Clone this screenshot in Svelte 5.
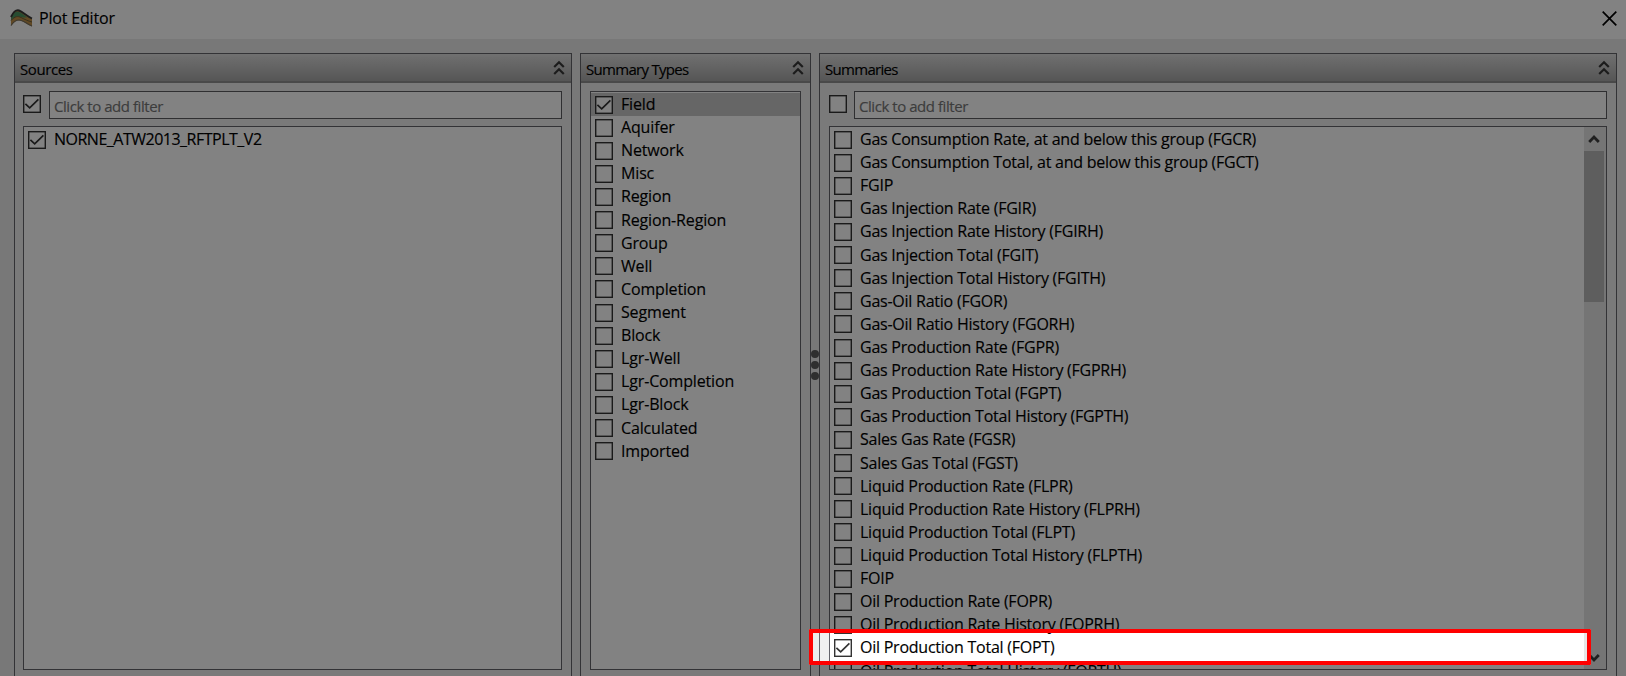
<script>
  const types = ['Field', 'Aquifer', 'Network', 'Misc', 'Region', 'Region-Region', 'Group', 'Well', 'Completion', 'Segment', 'Block', 'Lgr-Well', 'Lgr-Completion', 'Lgr-Block', 'Calculated', 'Imported'];
  const summaries = [
    'Gas Consumption Rate, at and below this group (FGCR)',
    'Gas Consumption Total, at and below this group (FGCT)',
    'FGIP',
    'Gas Injection Rate (FGIR)',
    'Gas Injection Rate History (FGIRH)',
    'Gas Injection Total (FGIT)',
    'Gas Injection Total History (FGITH)',
    'Gas-Oil Ratio (FGOR)',
    'Gas-Oil Ratio History (FGORH)',
    'Gas Production Rate (FGPR)',
    'Gas Production Rate History (FGPRH)',
    'Gas Production Total (FGPT)',
    'Gas Production Total History (FGPTH)',
    'Sales Gas Rate (FGSR)',
    'Sales Gas Total (FGST)',
    'Liquid Production Rate (FLPR)',
    'Liquid Production Rate History (FLPRH)',
    'Liquid Production Total (FLPT)',
    'Liquid Production Total History (FLPTH)',
    'FOIP',
    'Oil Production Rate (FOPR)',
    'Oil Production Rate History (FOPRH)',
    'Oil Production Total (FOPT)',
    'Oil Production Total History (FOPTH)'
  ];
</script>

{#snippet box(checked)}
  <svg class="box" viewBox="0 0 18 18">
    <rect x="0.7" y="0.7" width="16.6" height="16.6" fill="#fff" stroke="#333" stroke-width="1.4" />
    {#if checked}<path d="M2.4 8.8 6.7 12.9 15.4 4.4" fill="none" stroke="#333" stroke-width="1.7" />{/if}
  </svg>
{/snippet}

{#snippet header(title)}
  <header class="head">
    <span>{title}</span>
    <svg width="12" height="16" viewBox="0 0 12 16" fill="none" stroke="#383838" stroke-width="2.2"><path d="M1.2 7 6 2.2 10.8 7M1.2 14 6 9.2 10.8 14" /></svg>
  </header>
{/snippet}

{#snippet row(label, checked, selected)}
  <div class="row" class:selected>{@render box(checked)}<span>{label}</span></div>
{/snippet}

<div class="dialog">
  <div class="titlebar">
    <svg width="23" height="19" viewBox="0 0 23 19">
      <path d="M1 8C4 2 6 .5 9 1.500C13 3 17 7 22 9.500V17.500C16 15 13 11.500 9 11.500C5 11.500 3 14 1 17Z" fill="#c09048" />
      <path d="M1 9C4 3 6 2 9 3C12 4 14 6 17 8.500C13 9 11 7.500 8 7.500C5 7.500 3 9 1 11.500Z" fill="#4b9560" />
      <path d="M1 8C4 2 6 .5 9 1.500C13 3 17 7 22 9.500" fill="none" stroke="#383838" stroke-width="1.900" />
      <path d="M1 11.500C5 7 8 7 11 8.500C15 10.500 18 12 22 13" fill="none" stroke="#6e603c" stroke-width="1" />
      <path d="M1 16.500C3 13.500 5 11 9 11C13 11 16 14.500 22 17" fill="none" stroke="#77705f" stroke-width="1.200" />
    </svg>
    <span class="title">Plot Editor</span>
    <svg width="15" height="15" viewBox="0 0 15 15"><path d="M.7.7 14.300 14.300M14.300.7.7 14.300" stroke="#000" stroke-width="1.700" /></svg>
  </div>

  <div class="panels">
    <section class="panel sources">
      {@render header('Sources')}
      <div class="body">
        <div class="filter">{@render box(true)}<div class="input">Click to add filter</div></div>
        <div class="list">{@render row('NORNE_ATW2013_RFTPLT_V2', true, false)}</div>
      </div>
    </section>

    <section class="panel types">
      {@render header('Summary Types')}
      <div class="body">
        <div class="list">
          {#each types as t, i}{@render row(t, i === 0, i === 0)}{/each}
        </div>
      </div>
    </section>

    <div class="splitter"><i></i><i></i><i></i></div>

    <section class="panel summaries">
      {@render header('Summaries')}
      <div class="body">
        <div class="filter">{@render box(false)}<div class="input">Click to add filter</div></div>
        <div class="list scroll">
          <div class="rows">
            {#each summaries as s, i}{@render row(s, i === 22, false)}{/each}
          </div>
          <div class="bar">
            <svg width="12" height="10" viewBox="0 0 12 10"><path d="M1.200 8 6 3 10.800 8" fill="none" stroke="#404040" stroke-width="2.800" /></svg>
            <div class="thumb"></div>
            <svg class="down" width="12" height="10" viewBox="0 0 12 10"><path d="M1.200 2 6 7 10.800 2" fill="none" stroke="#404040" stroke-width="2.800" /></svg>
          </div>
        </div>
      </div>
    </section>
  </div>
  <div class="spotlight"></div>
</div>

<style>
  :global(body) { overflow: hidden; }
  .dialog {
    position: relative; width: 1626px; height: 676px; overflow: hidden; box-sizing: border-box;
    display: flex; flex-direction: column; background: #ececec; color: #000;
    font: 16px/23px "Open Sans", "Noto Sans", sans-serif; letter-spacing: -0.24px; white-space: nowrap;
    -webkit-text-stroke: 0.15px;
  }
  .dialog :global(*) { box-sizing: border-box; }
  svg { display: block; flex: none; }
  .titlebar { height: 39px; flex: none; background: #fff; display: flex; align-items: center; padding: 0 9px 3px 10px; }
  .title { flex: 1; margin-left: 6px; padding-top: 1px; letter-spacing: -0.18px; }
  .panels { flex: 1; display: flex; padding: 14px 10px 0 14px; min-height: 0; }
  .panel { height: 640px; border: 1px solid #64646b; display: flex; flex-direction: column; background: #f0f0f0; flex: none; }
  .sources { width: 558px; margin-right: 8px; }
  .types { width: 231px; }
  .summaries { width: 798px; }
  .head {
    height: 29px; flex: none; display: flex; justify-content: space-between; align-items: center; padding: 2px 6px 0 5px;
    background: linear-gradient(#dcdcdc, #a8a8a8); border-bottom: 2px solid #909090;
    font-size: 15px; letter-spacing: -0.7px;
  }
  .head span { padding-top: 1px; }
  .sources .head { letter-spacing: -0.4px; }
  .head svg { margin-top: -2px; }
  .body { padding: 8px 9px 0 8px; display: flex; flex-direction: column; gap: 7px; }
  .types .body, .summaries .body { padding-left: 9px; }
  .filter { display: flex; align-items: center; }
  .filter .input { flex: 1; height: 28px; margin-left: 8px; border: 1px solid #5c5c60; background: #fff; color: #777; padding: 3px 4px; font-size: 15px; letter-spacing: -0.45px; }
  .summaries .input { margin-left: 7px; }
  .box { width: 18px; height: 18px; }
  .filter .box { margin-top: -2px; }
  .list { height: 544px; border: 1px solid #64646b; background: #fff; overflow: hidden; padding-top: 1px; }
  .sources .list { letter-spacing: -0.5px; }
  .types .list { height: 579px; padding-top: 1px; letter-spacing: -0.15px; }
  .row { height: 23.120px; display: flex; align-items: center; padding: 0 4px; gap: 8px; }
  .row.selected { background: #c8c8c8; }
  .scroll { display: flex; padding: 0; }
  .rows { flex: 1; padding-top: 1px; }
  .bar { width: 22px; background: #e6e6e6; display: flex; flex-direction: column; align-items: center; padding: 7px 2px 6px 0; }
  .thumb { width: 20px; height: 151px; margin-top: 7px; background: #b9b9b9; }
  .down { margin-top: auto; }
  .splitter { width: 8px; display: flex; flex-direction: column; align-items: center; gap: 3px; padding-top: 297px; flex: none; }
  .splitter i { width: 8px; height: 8px; border-radius: 50%; background: #5c5c5c; flex: none; }
  .spotlight {
    position: absolute; left: 809px; top: 629px; width: 782px; height: 36px; border: 4px solid #f00; border-radius: 1px;
    box-shadow: 0 0 0 1800px rgba(0, 0, 0, 0.49);
  }
</style>
